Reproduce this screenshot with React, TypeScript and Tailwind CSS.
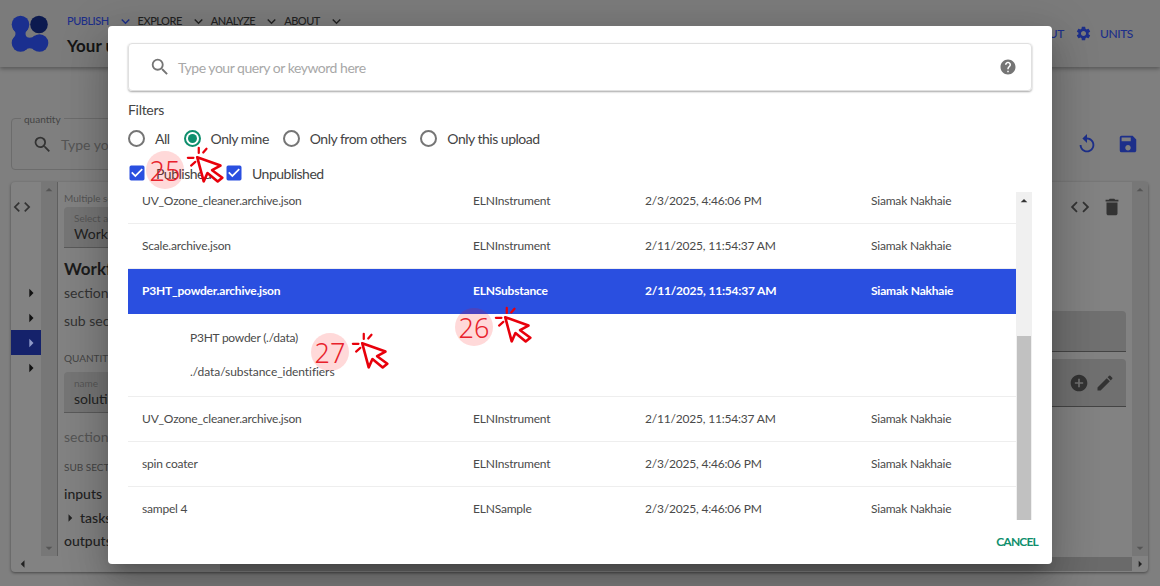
import React from "react";
import {
  MdSearch, MdHelp, MdSave, MdReplay, MdSettings, MdCode, MdDelete, MdAddCircle, MdEdit,
  MdExpandMore, MdArrowRight, MdArrowDropDown, MdArrowDropUp, MdArrowLeft, MdCheckBox, MdTune,
} from "react-icons/md";

const font = { fontFamily: '"Lato","Open Sans",sans-serif' };

function Logo() {
  return (
    <svg width="38" height="38" viewBox="0 0 38 38">
      <circle cx="28" cy="9.5" r="8.8" fill="#0c1a4f" />
      <g fill="#1a2f8f">
        <circle cx="9.5" cy="9.5" r="8.8" />
        <circle cx="9.5" cy="28" r="8.8" />
        <circle cx="28.5" cy="28" r="8.8" />
        <path d="M2 14Q7 19 2 24H17Q12 19 17 14Z" />
        <path d="M13 20.5Q19 25 24 20.5V35.5Q19 31 13 35.5Z" />
      </g>
    </svg>
  );
}

function Nav({ label, active }: { label: string; active?: boolean }) {
  return (
    <div className={`flex items-center gap-[8px] text-[11px] font-medium tracking-[-0.5px] ${active ? "text-[#1d2f8a]" : "text-[#222]"}`}>
      <span>{label}</span>
      <MdExpandMore size={17} />
    </div>
  );
}

function Pointer({ className }: { className: string }) {
  return (
    <svg width="41" height="41" viewBox="-12 -12 44 44" className={`absolute ${className}`}>
      <path d="M0 0L25 9L16 14L27 22L22 26L11 17L7 26Z" fill="#fff" stroke="#e8000b" strokeWidth="2.8" strokeLinejoin="round" />
      <path d="M-10 .7H-4M1.7-10V-4.5M10-9L6.5-5M-2 5L-6.5 9" stroke="#e8000b" strokeWidth="2.4" strokeLinecap="round" fill="none" />
    </svg>
  );
}

function Badge({ n, className }: { n: string; className: string }) {
  return (
    <div className={`absolute w-[38px] h-[38px] rounded-full bg-[#ff0000]/15 flex items-center justify-center text-[27px] font-light leading-none text-[#e8212b] ${className}`} style={{ fontFamily: '"Noto Sans",sans-serif' }}>
      {n}
    </div>
  );
}

function Radio({ label, on }: { label: string; on?: boolean }) {
  return (
    <div className="flex items-center gap-[10px]">
      <span className={`w-[17px] h-[17px] rounded-full border-2 flex items-center justify-center ${on ? "border-[#0f8f6d]" : "border-[#757575]"}`}>
        {on && <span className="w-[9px] h-[9px] rounded-full bg-[#0f8f6d]" />}
      </span>
      <span>{label}</span>
    </div>
  );
}

const rows = [
  ["UV_Ozone_cleaner.archive.json", "ELNInstrument", "2/3/2025, 4:46:06 PM", "Siamak Nakhaie"],
  ["Scale.archive.json", "ELNInstrument", "2/11/2025, 11:54:37 AM", "Siamak Nakhaie"],
];
const rows2 = [
  ["UV_Ozone_cleaner.archive.json", "ELNInstrument", "2/11/2025, 11:54:37 AM", "Siamak Nakhaie"],
  ["spin coater", "ELNInstrument", "2/3/2025, 4:46:06 PM", "Siamak Nakhaie"],
  ["sampel 4", "ELNSample", "2/3/2025, 4:46:06 PM", "Siamak Nakhaie"],
];

function Row({ cells, selected }: { cells: string[]; selected?: boolean }) {
  return (
    <div className={`grid grid-cols-[331px_172px_226px_1fr] items-center h-[45px] pl-[14px] text-[12px] tracking-[-0.2px] border-b ${selected ? "bg-[#2a4fe0] text-white font-bold border-[#2a4fe0]" : "text-[#4a4a4a] border-[#eeeeee]"}`}>
      {cells.map((c) => <div key={c}>{c}</div>)}
    </div>
  );
}

function FilledField({ label, value, className }: { label: string; value: string; className: string }) {
  return (
    <div className={`h-[41px] bg-[#757575] rounded-t border-b border-[#5a5a5a] pl-[10px] pt-[4px] whitespace-nowrap ${className}`}>
      <div className="text-[10px] leading-[14px] text-[#555]">{label}</div>
      <div className="text-[14px] leading-[18px] text-[#222]">{value}</div>
    </div>
  );
}

export default function App() {
  return (
    <div className="relative w-[1160px] h-[586px] overflow-hidden bg-[#7f7f7f] text-[#1c1c1c]" style={font}>
      <header className="h-[67px] bg-[#7b7b7b] shadow-[0_2px_4px_rgba(0,0,0,0.3)] flex items-center pl-[11px] pr-[27px]">
        <Logo />
        <div className="ml-[18px] flex flex-col gap-[3px] pt-[4px]">
          <div className="flex gap-[4px]">
            <Nav label="PUBLISH" active />
            <Nav label="EXPLORE" />
            <Nav label="ANALYZE" />
            <Nav label="ABOUT" />
          </div>
          <div className="text-[17px] font-bold text-[#151515]">Your uploads</div>
        </div>
        <div className="ml-auto flex items-center gap-[8px] text-[12px] font-medium tracking-[-0.4px] text-[#1d2f8a]">
          <MdTune size={16} />
          <span className="mr-[3px]">LAYOUT</span>
          <MdSettings size={17} />
          <span>UNITS</span>
        </div>
      </header>

      <main className="pl-[11px] pr-[12px]">
        <div className="flex items-center mt-[51px] h-[52px]">
          <div className="relative w-[400px] h-[52px] border border-[#6c6c6c] rounded flex items-center pl-[20px] gap-[8px] text-[#555] text-[14px]">
            <span className="absolute -top-[7px] left-[9px] px-[3px] bg-[#7f7f7f] text-[10px] text-[#444]">quantity</span>
            <MdSearch size={21} className="text-[#333]" />
            <span>Type your query</span>
          </div>
          <div className="ml-auto flex items-center gap-[19px] pr-[9px]">
            <MdReplay size={22} className="text-[#1d2f8a]" />
            <MdSave size={22} className="text-[#1d2f8a]" />
          </div>
        </div>

        <div className="mt-[12px] h-[390px] bg-[#828282] rounded shadow-[0_1px_3px_rgba(0,0,0,0.45)] flex flex-col">
          <div className="flex flex-1 min-h-0">
            <div className="w-[30px] pt-[15px] flex flex-col">
              <MdCode size={20} className="ml-[1px] text-[#333]" />
              <div className="mt-[63px] flex flex-col">
                {[0, 1, 2, 3].map((i) => (
                  <div key={i} className={`h-[25px] flex items-center justify-end ${i === 2 ? "bg-[#15226b] text-[#8f9ac8]" : "text-[#111]"}`}>
                    <MdArrowRight size={20} />
                  </div>
                ))}
              </div>
            </div>
            <div className="w-[16px] bg-[#777777] flex flex-col items-center justify-between text-[#555]">
              <MdArrowDropUp size={16} />
              <MdArrowDropDown size={16} />
            </div>
            <div className="w-[120px] overflow-hidden border-l border-[#5f5f5f] pl-[6px] pt-[9px] whitespace-nowrap">
              <div className="text-[10px] leading-[14px] text-[#555]">Multiple sections</div>
              <FilledField label="Select a section" value="Workflow" className="mt-[2px]" />
              <div className="mt-[10px] text-[17px] leading-[22px] font-bold text-[#1c1c1c]">Workflow</div>
              <div className="mt-[4px] text-[14px] leading-[18px] text-[#333]">section</div>
              <div className="mt-[10px] text-[14px] leading-[18px] text-[#333]">sub section</div>
              <div className="mt-[21px] text-[10px] leading-[14px] text-[#444]">QUANTITIES</div>
              <FilledField label="name" value="solution" className="mt-[7px]" />
              <div className="mt-[15px] text-[14px] leading-[18px] text-[#555]">section</div>
              <div className="mt-[14px] text-[10px] leading-[14px] text-[#444]">SUB SECTIONS</div>
              <div className="mt-[11px] text-[14px] leading-[18px] font-medium text-[#222]">inputs</div>
              <div className="mt-[6px] flex items-center text-[14px] leading-[18px] font-medium text-[#222] -ml-[3px]">
                <MdArrowRight size={18} />
                <span className="ml-[1px]">tasks</span>
              </div>
              <div className="mt-[5px] text-[14px] leading-[18px] font-medium text-[#222]">outputs</div>
            </div>
            <div className="flex-1 flex flex-col pt-[14px] items-end">
              <div className="flex items-center gap-[10px] pr-[9px] text-[#333]">
                <MdCode size={22} />
                <MdDelete size={22} />
              </div>
              <div className="mt-[93px] h-[41px] w-[200px] mr-[6px] bg-[#707070] rounded-t border-b border-[#444]" />
              <div className="mt-[7px] h-[48px] w-[200px] mr-[6px] bg-[#707070] rounded-t border-b border-[#444] flex items-center justify-end gap-[6px] pr-[11px] text-[#333]">
                <MdAddCircle size={20} />
                <MdEdit size={20} />
              </div>
            </div>
            <div className="w-[16px] bg-[#777777] flex flex-col items-center justify-between text-[#555]">
              <MdArrowDropUp size={16} />
              <MdArrowDropDown size={16} />
            </div>
          </div>
          <div className="h-[16px] flex items-center">
            <MdArrowLeft size={18} className="text-[#222] ml-[3px]" />
            <div className="h-[14px] flex-1 ml-[188px] bg-[#6a6a6a]" />
            <div className="w-[16px] flex justify-center"><MdArrowRight size={18} className="text-[#222]" /></div>
          </div>
        </div>
      </main>

      {/* dialog */}
      <div className="absolute left-[108px] top-[26px] w-[944px] h-[538px] bg-white rounded shadow-[0_11px_15px_-7px_rgba(0,0,0,0.2),0_24px_38px_3px_rgba(0,0,0,0.14),0_9px_46px_8px_rgba(0,0,0,0.12)] px-[20px] pt-[17px] flex flex-col">
        <div className="h-[48px] shrink-0 rounded border border-[#e0e0e0] shadow-[0_1px_2px_rgba(0,0,0,0.35)] flex items-center pl-[20px] pr-[14px] text-[14px] tracking-[-0.48px] text-[#a8a8a8]">
          <MdSearch size={22} className="text-[#757575]" />
          <span className="ml-[7px]">Type your query or keyword here</span>
          <MdHelp size={18} className="ml-auto text-[#757575]" />
        </div>
        <div className="mt-[9px] text-[14px] tracking-[-0.3px] text-[#444] h-[20px] leading-[20px]">Filters</div>
        <div className="mt-[9px] flex items-center gap-[14px] text-[14px] tracking-[-0.5px] text-[#444] h-[18px]">
          <Radio label="All" />
          <Radio label="Only mine" on />
          <Radio label="Only from others" />
          <Radio label="Only this upload" />
        </div>
        <div className="mt-[16px] flex items-center text-[14px] tracking-[-0.5px] text-[#444] h-[20px] -ml-[1px]">
          <MdCheckBox size={20} className="text-[#2a4fe0]" />
          <span className="ml-[9px] w-[68px]">Published</span>
          <MdCheckBox size={20} className="text-[#2a4fe0]" />
          <span className="ml-[8px]">Unpublished</span>
        </div>
        <div className="mt-[9px] h-[328px] shrink-0 overflow-hidden flex">
          <div className="w-[888px] -mt-[13px]">
            {rows.map((r) => <Row key={r[0]} cells={r} />)}
            <Row cells={["P3HT_powder.archive.json", "ELNSubstance", "2/11/2025, 11:54:37 AM", "Siamak Nakhaie"]} selected />
            <div className="h-[83px] pl-[62px] pt-[16px] text-[12px] tracking-[-0.25px] text-[#4a4a4a] border-b border-[#eeeeee]">
              <div className="h-[16px] leading-[16px]">P3HT powder (./data)</div>
              <div className="mt-[18px] h-[16px] leading-[16px] tracking-[-0.07px]">./data/substance_identifiers</div>
            </div>
            {rows2.map((r) => <Row key={r[0]} cells={r} />)}
          </div>
          <div className="w-[16px] bg-[#f0f0f0] flex flex-col">
            <div className="h-[144px] flex justify-center text-[#333]"><MdArrowDropUp size={18} /></div>
            <div className="flex-1 bg-[#c1c1c1] mx-[1px]" />
          </div>
        </div>
        <div className="mt-[13px] flex justify-end">
          <span className="-mr-[6px] text-[12px] font-bold tracking-[-0.8px] text-[#0f8f6d]">CANCEL</span>
        </div>
      </div>

      {/* annotations */}
      <Badge n="25" className="left-[146px] top-[151px]" />
      <Pointer className="left-[186px] top-[146px]" />
      <Badge n="26" className="left-[455px] top-[308px]" />
      <Pointer className="left-[494px] top-[306px]" />
      <Badge n="27" className="left-[311px] top-[333px]" />
      <Pointer className="left-[351px] top-[332px]" />
    </div>
  );
}
